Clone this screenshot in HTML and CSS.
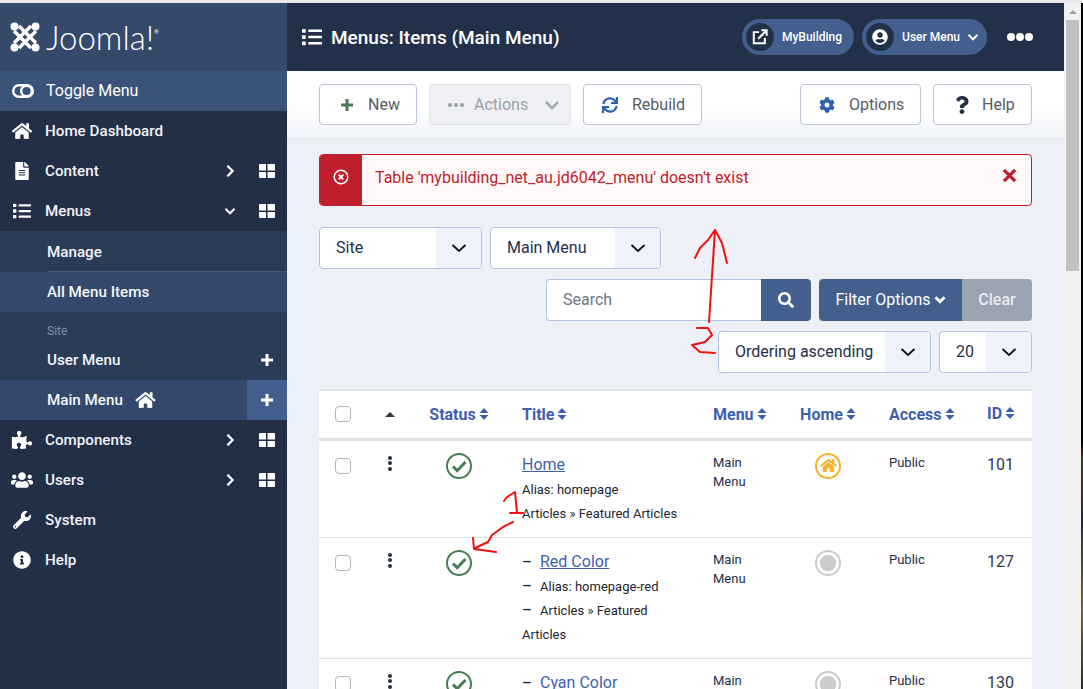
FILE: index.html
```html
<!DOCTYPE html>
<html lang="en">
<head>
<meta charset="utf-8">
<title>Menus: Items (Main Menu)</title>
<link rel="stylesheet" href="styles.css">
</head>
<body>
<svg class="sprite" xmlns="http://www.w3.org/2000/svg">
  <symbol id="i-list" viewBox="0 0 512 512"><path d="M80 368H16a16 16 0 0 0-16 16v64a16 16 0 0 0 16 16h64a16 16 0 0 0 16-16v-64a16 16 0 0 0-16-16zm0-320H16A16 16 0 0 0 0 64v64a16 16 0 0 0 16 16h64a16 16 0 0 0 16-16V64a16 16 0 0 0-16-16zm0 160H16a16 16 0 0 0-16 16v64a16 16 0 0 0 16 16h64a16 16 0 0 0 16-16v-64a16 16 0 0 0-16-16zm416 176H176a16 16 0 0 0-16 16v32a16 16 0 0 0 16 16h320a16 16 0 0 0 16-16v-32a16 16 0 0 0-16-16zm0-320H176a16 16 0 0 0-16 16v32a16 16 0 0 0 16 16h320a16 16 0 0 0 16-16V80a16 16 0 0 0-16-16zm0 160H176a16 16 0 0 0-16 16v32a16 16 0 0 0 16 16h320a16 16 0 0 0 16-16v-32a16 16 0 0 0-16-16z"/></symbol>
  <symbol id="i-home" viewBox="0 0 576 512"><path d="M280.37 148.26L96 300.11V464a16 16 0 0 0 16 16l112.06-.29a16 16 0 0 0 15.92-16V368a16 16 0 0 1 16-16h64a16 16 0 0 1 16 16v95.64a16 16 0 0 0 16 16.05L464 480a16 16 0 0 0 16-16V300L295.67 148.26a12.19 12.19 0 0 0-15.3 0zM571.6 251.47L488 182.56V44.05a12 12 0 0 0-12-12h-56a12 12 0 0 0-12 12v72.61L318.47 43a48 48 0 0 0-61 0L4.34 251.47a12 12 0 0 0-1.6 16.9l25.5 31A12 12 0 0 0 45.15 301l235.22-193.74a12.19 12.19 0 0 1 15.3 0L530.9 301a12 12 0 0 0 16.9-1.6l25.5-31a12 12 0 0 0-1.7-16.93z"/></symbol>
  <symbol id="i-file" viewBox="0 0 384 512"><path d="M224 136V0H24C10.7 0 0 10.7 0 24v464c0 13.3 10.7 24 24 24h336c13.3 0 24-10.7 24-24V160H248c-13.2 0-24-10.8-24-24zm64 236c0 6.6-5.4 12-12 12H108c-6.6 0-12-5.4-12-12v-8c0-6.6 5.4-12 12-12h168c6.6 0 12 5.4 12 12v8zm0-64c0 6.6-5.4 12-12 12H108c-6.6 0-12-5.4-12-12v-8c0-6.6 5.4-12 12-12h168c6.6 0 12 5.4 12 12v8zm0-72v8c0 6.6-5.4 12-12 12H108c-6.6 0-12-5.4-12-12v-8c0-6.6 5.4-12 12-12h168c6.6 0 12 5.4 12 12zm96-114.1v6.1H256V0h6.1c6.4 0 12.5 2.5 17 7l97.9 98c4.5 4.5 7 10.6 7 16.9z"/></symbol>
  <symbol id="i-puzzle" viewBox="0 0 576 512"><path d="M519.442 288.651c-41.519 0-59.5 31.593-82.058 31.593C377.409 320.244 432 144 432 144s-196.288 80-196.288-3.297c0-35.827 36.288-46.25 36.288-85.985C272 19.216 243.885 0 210.539 0c-34.654 0-66.366 18.891-66.366 56.346 0 41.364 31.711 59.277 31.711 81.75C175.885 207.719 0 166.758 0 166.758v333.237s178.635 41.047 178.635-28.662c0-22.473-40-40.107-40-81.471 0-37.456 29.25-56.346 63.577-56.346 33.673 0 61.788 19.216 61.788 54.717 0 39.735-36.288 50.158-36.288 85.985 0 60.803 129.675 25.73 181.23 25.73 0 0-34.725-120.101 25.827-120.101 35.962 0 46.423 36.152 86.308 36.152C556.712 416 576 387.99 576 354.443c0-34.199-18.962-65.792-56.558-65.792z"/></symbol>
  <symbol id="i-users" viewBox="0 0 640 512"><path d="M96 224c35.3 0 64-28.7 64-64s-28.7-64-64-64-64 28.7-64 64 28.7 64 64 64zm448 0c35.3 0 64-28.7 64-64s-28.7-64-64-64-64 28.7-64 64 28.7 64 64 64zm32 32h-64c-17.6 0-33.5 7.1-45.1 18.6 40.3 22.1 68.9 62 75.1 109.4h66c17.7 0 32-14.3 32-32v-32c0-35.3-28.7-64-64-64zm-256 0c61.9 0 112-50.1 112-112S381.9 32 320 32 208 82.1 208 144s50.1 112 112 112zm76.8 32h-8.3c-20.8 10-43.9 16-68.5 16s-47.6-6-68.5-16h-8.3C179.6 288 128 339.6 128 403.2V432c0 26.5 21.5 48 48 48h288c26.5 0 48-21.5 48-48v-28.8c0-63.6-51.6-115.2-115.2-115.2zm-223.7-13.4C161.5 263.1 145.6 256 128 256H64c-35.3 0-64 28.7-64 64v32c0 17.7 14.3 32 32 32h65.9c6.3-47.4 34.9-87.3 75.2-109.4z"/></symbol>
  <symbol id="i-wrench" viewBox="0 0 512 512"><path d="M507.73 109.1c-2.24-9.03-13.54-12.09-20.12-5.51l-74.36 74.36-67.88-11.31-11.31-67.88 74.36-74.36c6.62-6.62 3.43-17.9-5.66-20.16-47.38-11.74-99.55.91-136.58 37.93-39.64 39.64-50.55 97.1-34.05 147.2L18.74 402.76c-24.99 24.99-24.99 65.51 0 90.5 24.99 24.99 65.51 24.99 90.5 0l213.21-213.21c50.12 16.71 107.47 5.68 147.37-34.22 37.07-37.07 49.7-89.32 37.91-136.73zM64 472c-13.25 0-24-10.75-24-24 0-13.26 10.75-24 24-24s24 10.74 24 24c0 13.25-10.75 24-24 24z"/></symbol>
  <symbol id="i-info" viewBox="0 0 512 512"><path d="M256 8C119.043 8 8 119.083 8 256c0 136.997 111.043 248 248 248s248-111.003 248-248C504 119.083 392.957 8 256 8zm0 110c23.196 0 42 18.804 42 42s-18.804 42-42 42-42-18.804-42-42 18.804-42 42-42zm56 254c0 6.627-5.373 12-12 12h-88c-6.627 0-12-5.373-12-12v-24c0-6.627 5.373-12 12-12h12v-64h-12c-6.627 0-12-5.373-12-12v-24c0-6.627 5.373-12 12-12h64c6.627 0 12 5.373 12 12v100h12c6.627 0 12 5.373 12 12v24z"/></symbol>
  <symbol id="i-sync" viewBox="0 0 512 512"><path d="M440.65 12.57l4 82.77A247.16 247.16 0 0 0 255.83 8C134.73 8 33.91 94.92 12.29 209.82A12 12 0 0 0 24.09 224h49.05a12 12 0 0 0 11.67-9.26 175.91 175.91 0 0 1 317-56.94l-101.46-4.86a12 12 0 0 0-12.57 12v47.41a12 12 0 0 0 12 12H500a12 12 0 0 0 12-12V12a12 12 0 0 0-12-12h-47.37a12 12 0 0 0-11.98 12.57zM255.83 432a175.61 175.61 0 0 1-146-77.8l101.8 4.87a12 12 0 0 0 12.57-12v-47.4a12 12 0 0 0-12-12H12a12 12 0 0 0-12 12V500a12 12 0 0 0 12 12h47.35a12 12 0 0 0 12-12.6l-4.15-82.57A247.17 247.17 0 0 0 255.83 504c121.11 0 221.93-86.92 243.55-201.82a12 12 0 0 0-11.8-14.18h-49.05a12 12 0 0 0-11.67 9.26A175.86 175.86 0 0 1 255.83 432z"/></symbol>
  <symbol id="i-cog" viewBox="0 0 512 512"><path d="M487.4 315.7l-42.6-24.6c4.3-23.2 4.3-47 0-70.2l42.6-24.6c4.9-2.8 7.1-8.6 5.5-14-11.1-35.6-30-67.8-54.7-94.6-3.8-4.1-10-5.1-14.8-2.3L380.8 110c-17.9-15.4-38.5-27.3-60.8-35.1V25.8c0-5.6-3.9-10.5-9.4-11.7-36.7-8.2-74.3-7.8-109.2 0-5.5 1.2-9.4 6.1-9.4 11.7V75c-22.2 7.9-42.8 19.8-60.8 35.1L88.7 85.5c-4.9-2.8-11-1.9-14.8 2.3-24.7 26.7-43.6 58.9-54.7 94.6-1.7 5.4.6 11.2 5.5 14L67.3 221c-4.3 23.2-4.3 47 0 70.2l-42.6 24.6c-4.9 2.8-7.1 8.6-5.5 14 11.1 35.6 30 67.8 54.7 94.6 3.8 4.1 10 5.1 14.8 2.3l42.6-24.6c17.9 15.4 38.5 27.3 60.8 35.1v49.2c0 5.6 3.9 10.5 9.4 11.7 36.7 8.2 74.3 7.8 109.2 0 5.5-1.2 9.4-6.1 9.4-11.7v-49.2c22.2-7.9 42.8-19.8 60.8-35.1l42.6 24.6c4.9 2.8 11 1.9 14.8-2.3 24.7-26.7 43.6-58.9 54.7-94.6 1.5-5.5-.7-11.3-5.6-14.1zM256 336c-44.1 0-80-35.9-80-80s35.9-80 80-80 80 35.9 80 80-35.9 80-80 80z"/></symbol>
  <symbol id="i-question" viewBox="0 0 384 512"><path d="M202.021 0C122.202 0 70.503 32.703 29.914 91.026c-7.363 10.58-5.093 25.086 5.178 32.874l43.138 32.709c10.373 7.865 25.132 6.026 33.253-4.148 25.049-31.381 43.63-49.449 82.757-49.449 30.764 0 68.816 19.799 68.816 49.631 0 22.552-18.617 34.134-48.993 51.164-35.423 19.86-82.299 44.576-82.299 106.405V320c0 13.255 10.745 24 24 24h72.471c13.255 0 24-10.745 24-24v-5.773c0-42.86 125.268-44.645 125.268-160.627C377.504 66.256 286.902 0 202.021 0zM192 373.459c-38.196 0-69.271 31.075-69.271 69.271 0 38.195 31.075 69.27 69.271 69.27s69.271-31.075 69.271-69.271-31.075-69.27-69.271-69.27z"/></symbol>
  <symbol id="i-search" viewBox="0 0 512 512"><path d="M505 442.7L405.3 343c-4.5-4.5-10.6-7-17-7H372c27.6-35.3 44-79.7 44-128C416 93.1 322.9 0 208 0S0 93.1 0 208s93.1 208 208 208c48.3 0 92.7-16.4 128-44v16.3c0 6.4 2.5 12.5 7 17l99.7 99.7c9.4 9.4 24.6 9.4 33.9 0l28.3-28.3c9.4-9.4 9.4-24.6.1-34zM208 336c-70.7 0-128-57.2-128-128 0-70.7 57.2-128 128-128 70.7 0 128 57.2 128 128 0 70.7-57.2 128-128 128z"/></symbol>
  <symbol id="i-user" viewBox="0 0 496 512"><path d="M248 8C111 8 0 119 0 256s111 248 248 248 248-111 248-248S385 8 248 8zm0 96c48.6 0 88 39.4 88 88s-39.4 88-88 88-88-39.4-88-88 39.4-88 88-88zm0 344c-58.7 0-111.3-26.6-146.5-68.2 18.8-35.4 55.6-59.8 98.5-59.8 2.4 0 4.8.4 7.1 1.1 13 4.2 26.6 6.9 40.9 6.9 14.3 0 28-2.7 40.9-6.9 2.3-.7 4.7-1.1 7.1-1.1 42.9 0 79.7 24.4 98.5 59.8C359.3 421.4 306.7 448 248 448z"/></symbol>
  <symbol id="i-right" viewBox="0 0 12 16"><path d="M3 2l6 6-6 6" fill="none" stroke="currentColor" stroke-width="2.600"/></symbol>
  <symbol id="i-down" viewBox="0 0 16 12"><path d="M2 3l6 6 6-6" fill="none" stroke="currentColor" stroke-width="2.600"/></symbol>
  <symbol id="i-bold" viewBox="0 0 16 12"><path d="M2 3l6 6 6-6" fill="none" stroke="currentColor" stroke-width="3.800"/></symbol>
  <symbol id="i-thin" viewBox="0 0 16 10"><path d="M1.500 2L8 8l6.500-6" fill="none" stroke="currentColor" stroke-width="1.800"/></symbol>
  <symbol id="i-plus" viewBox="0 0 14 14"><path d="M7 1v12M1 7h12" fill="none" stroke="currentColor" stroke-width="3"/></symbol>
  <symbol id="i-grid" viewBox="0 0 16 14"><path d="M0 1a1 1 0 0 1 1-1h6v6.500H0zM8.500 0H15a1 1 0 0 1 1 1v5.500H8.500zM0 8h7v6H1a1 1 0 0 1-1-1zM8.500 8H16v5a1 1 0 0 1-1 1H8.500z"/></symbol>
  <symbol id="i-sort" viewBox="0 0 10 12"><path d="M5 0l4.500 5H.5zM5 12L.5 7h9z"/></symbol>
  <symbol id="i-check" viewBox="0 0 26 26"><circle cx="13" cy="13" r="12" fill="none" stroke="#457d54" stroke-width="2"/><path d="M7 13.500l4.200 4.200L19.500 9" fill="none" stroke="#457d54" stroke-width="3"/></symbol>
</svg>

<div class="topline"></div>
<div class="page">
  <aside class="sidebar">
    <div class="brand">
      <svg class="brand-mark" viewBox="0 0 30 30" fill="none" stroke="#fff" stroke-width="3.400">
        <path d="M4 9L21 26M9 4L26 21M26 9L9 26M21 4L4 21"/>
        <circle cx="4.500" cy="4.500" r="4" fill="#fff" stroke="none"/><circle cx="25.500" cy="4.500" r="4" fill="#fff" stroke="none"/>
        <circle cx="4.500" cy="25.500" r="4" fill="#fff" stroke="none"/><circle cx="25.500" cy="25.500" r="4" fill="#fff" stroke="none"/>
      </svg>
      <span class="brand-name">Joomla!</span><sup class="brand-reg">®</sup>
    </div>
    <nav class="nav">
      <div class="nav-item nav-toggle"><svg class="toggle-icon" viewBox="0 0 22 14" fill="none" stroke="#fff" stroke-width="2.400"><rect x="1.200" y="1.200" width="19.600" height="11.600" rx="5.800"/><circle cx="14.500" cy="7" r="5.300"/></svg><span class="nav-label">Toggle Menu</span></div>
      <div class="nav-item"><svg class="nav-icon"><use href="#i-home"/></svg><span class="nav-label">Home Dashboard</span></div>
      <div class="nav-item"><svg class="nav-icon"><use href="#i-file"/></svg><span class="nav-label">Content</span><svg class="nav-arrow"><use href="#i-right"/></svg><svg class="nav-grid"><use href="#i-grid"/></svg></div>
      <div class="nav-item"><svg class="nav-icon"><use href="#i-list"/></svg><span class="nav-label">Menus</span><svg class="nav-arrow"><use href="#i-down"/></svg><svg class="nav-grid"><use href="#i-grid"/></svg></div>
      <div class="sub">
        <div class="sub-item sub-rule">Manage</div>
        <div class="sub-item sub-active">All Menu Items</div>
        <div class="sub-heading">Site</div>
        <div class="sub-item sub-user">User Menu<svg class="sub-plus"><use href="#i-plus"/></svg></div>
        <div class="sub-item sub-active sub-main">Main Menu<svg class="sub-home"><use href="#i-home"/></svg><span class="sub-add"><svg class="sub-plus"><use href="#i-plus"/></svg></span></div>
      </div>
      <div class="nav-item"><svg class="nav-icon"><use href="#i-puzzle"/></svg><span class="nav-label">Components</span><svg class="nav-arrow"><use href="#i-right"/></svg><svg class="nav-grid"><use href="#i-grid"/></svg></div>
      <div class="nav-item"><svg class="nav-icon"><use href="#i-users"/></svg><span class="nav-label">Users</span><svg class="nav-arrow"><use href="#i-right"/></svg><svg class="nav-grid"><use href="#i-grid"/></svg></div>
      <div class="nav-item"><svg class="nav-icon"><use href="#i-wrench"/></svg><span class="nav-label">System</span></div>
      <div class="nav-item"><svg class="nav-icon"><use href="#i-info"/></svg><span class="nav-label">Help</span></div>
    </nav>
  </aside>

  <main class="main">
    <header class="header">
      <svg class="header-icon"><use href="#i-list"/></svg>
      <h1 class="header-title">Menus: Items (Main Menu)</h1>
      <div class="pill"><span class="pill-icon"><svg class="pill-link" viewBox="0 0 18 18"><path d="M8 3.500H2v12.500h12.500v-6M7 11L16 2M10.500 1.500H16.500V7.500"/></svg></span><span class="pill-text">MyBuilding</span></div>
      <div class="pill pill-user"><span class="pill-icon"><svg class="pill-svg"><use href="#i-user"/></svg></span><span class="pill-text">User Menu</span><svg class="pill-caret"><use href="#i-down"/></svg></div>
      <div class="dots"><span class="dot"></span><span class="dot"></span><span class="dot"></span></div>
    </header>

    <div class="toolbar">
      <div class="btn btn-new"><svg class="btn-icon icon-green"><use href="#i-plus"/></svg>New</div>
      <div class="btn btn-actions"><span class="mini-dots"><span class="mini-dot"></span><span class="mini-dot"></span><span class="mini-dot"></span></span>Actions<svg class="actions-caret"><use href="#i-down"/></svg></div>
      <div class="btn btn-rebuild"><svg class="btn-icon icon-blue"><use href="#i-sync"/></svg>Rebuild</div>
      <div class="btn btn-options"><svg class="btn-icon icon-blue"><use href="#i-cog"/></svg>Options</div>
      <div class="btn btn-help"><svg class="btn-icon icon-navy"><use href="#i-question"/></svg>Help</div>
    </div>

    <div class="content">
      <div class="alert">
        <div class="alert-side"><svg class="alert-icon" viewBox="0 0 16 16" fill="none" stroke="#fff"><circle cx="8" cy="8" r="6.800" stroke-width="1.500"/><path d="M5.700 5.700l4.600 4.600M10.300 5.700l-4.600 4.600" stroke-width="1.800"/></svg></div>
        <div class="alert-text">Table 'mybuilding_net_au.jd6042_menu' doesn't exist</div>
        <svg class="alert-close" viewBox="0 0 16 16" fill="none" stroke="#bf1e2c" stroke-width="3.500"><path d="M2 2l12 12M14 2L2 14"/></svg>
      </div>

      <div class="row-selects">
        <div class="select select-site"><span class="select-value">Site</span><span class="select-arrow"><svg class="select-chevron"><use href="#i-thin"/></svg></span></div>
        <div class="select select-menu"><span class="select-value">Main Menu</span><span class="select-arrow"><svg class="select-chevron"><use href="#i-thin"/></svg></span></div>
      </div>

      <div class="row-search">
        <div class="search-input">Search</div>
        <div class="search-btn"><svg class="search-icon"><use href="#i-search"/></svg></div>
        <div class="filter-btn">Filter Options<svg class="filter-caret"><use href="#i-bold"/></svg></div>
        <div class="clear-btn">Clear</div>
      </div>

      <div class="row-order">
        <div class="select select-order"><span class="select-value">Ordering ascending</span><span class="select-arrow"><svg class="select-chevron"><use href="#i-thin"/></svg></span></div>
        <div class="select select-limit"><span class="select-value">20</span><span class="select-arrow"><svg class="select-chevron"><use href="#i-thin"/></svg></span></div>
      </div>

      <table class="table">
        <colgroup>
          <col class="c1"><col class="c2"><col class="c3"><col class="c4"><col class="c5"><col class="c6"><col class="c7"><col class="c8">
        </colgroup>
        <thead>
          <tr>
            <th class="cell-check"><span class="checkbox"></span></th>
            <th class="cell-center"><span class="caret-up"></span></th>
            <th class="cell-center">Status<svg class="sort"><use href="#i-sort"/></svg></th>
            <th class="cell-title">Title<svg class="sort"><use href="#i-sort"/></svg></th>
            <th class="cell-menu">Menu<svg class="sort"><use href="#i-sort"/></svg></th>
            <th class="cell-center">Home<svg class="sort"><use href="#i-sort"/></svg></th>
            <th class="cell-access">Access<svg class="sort"><use href="#i-sort"/></svg></th>
            <th class="cell-id">ID<svg class="sort"><use href="#i-sort"/></svg></th>
          </tr>
        </thead>
        <tbody>
          <tr>
            <td class="cell-check"><span class="checkbox"></span></td>
            <td class="cell-center"><span class="kebab"><span class="kdot"></span><span class="kdot"></span><span class="kdot"></span></span></td>
            <td class="cell-center"><svg class="state"><use href="#i-check"/></svg></td>
            <td class="cell-title">
              <a class="item-link" href="#">Home</a>
              <div class="item-meta">Alias: homepage</div>
              <div class="item-meta">Articles » Featured Articles</div>
            </td>
            <td class="cell-menu"><div class="small">Main Menu</div></td>
            <td class="cell-center"><span class="home-badge"><svg class="home-badge-icon"><use href="#i-home"/></svg></span></td>
            <td class="cell-access"><div class="small">Public</div></td>
            <td class="cell-id">101</td>
          </tr>
          <tr>
            <td class="cell-check"><span class="checkbox"></span></td>
            <td class="cell-center"><span class="kebab"><span class="kdot"></span><span class="kdot"></span><span class="kdot"></span></span></td>
            <td class="cell-center"><svg class="state"><use href="#i-check"/></svg></td>
            <td class="cell-title">
              <span class="dash">–</span><a class="item-link" href="#">Red Color</a>
              <div class="item-meta"><span class="dash">–</span>Alias: homepage-red</div>
              <div class="item-meta"><span class="dash">–</span>Articles » Featured Articles</div>
            </td>
            <td class="cell-menu"><div class="small">Main Menu</div></td>
            <td class="cell-center"><span class="home-off"></span></td>
            <td class="cell-access"><div class="small">Public</div></td>
            <td class="cell-id">127</td>
          </tr>
          <tr>
            <td class="cell-check"><span class="checkbox"></span></td>
            <td class="cell-center"><span class="kebab"><span class="kdot"></span><span class="kdot"></span><span class="kdot"></span></span></td>
            <td class="cell-center"><svg class="state"><use href="#i-check"/></svg></td>
            <td class="cell-title">
              <span class="dash">–</span><a class="item-link" href="#">Cyan Color</a>
            </td>
            <td class="cell-menu"><div class="small">Main Menu</div></td>
            <td class="cell-center"><span class="home-off"></span></td>
            <td class="cell-access"><div class="small">Public</div></td>
            <td class="cell-id">130</td>
          </tr>
        </tbody>
      </table>
    </div>
  </main>

  <div class="scrollbar"><span class="scroll-up"></span><span class="scroll-thumb"></span></div>
  <div class="edge"></div>
</div>

<svg class="marks" viewBox="0 0 1083 689" fill="none" stroke="#f01010" stroke-width="2" stroke-linecap="round" stroke-linejoin="round">
  <path d="M715 230C713 260 711 290 709 322M695 258L700 248L708 240L715 230L722 243L727 263"/>
  <path d="M697 328H708L712 335L705 342L692 345L700 352L715 353"/>
  <path d="M504 501L507 497L515 492L517 513M510 513H523"/>
  <path d="M513 522L503 527L492 535L488 542L475 548M473 538L474 549L496 552"/>
</svg>
</body>
</html>
```
FILE: styles.css
```css
* { box-sizing: border-box; }
html, body { margin: 0; height: 100%; }
body { width: 1083px; height: 689px; overflow: hidden; position: relative; background: #edf0f6; font-family: Roboto, "Liberation Sans", sans-serif; color: #22304a; }
.sprite { display: none; }
.topline { height: 3px; background: #e9e9e9; }
.page { display: flex; height: 686px; }

.sidebar { width: 287px; flex: none; background: #232e47; color: #fff; }
.brand { height: 68px; background: #35496a; display: flex; align-items: center; padding-left: 10px; }
.brand-mark { width: 30px; height: 30px; margin-right: 6px; }
.brand-name { font-family: Lato, sans-serif; font-weight: 300; font-size: 33px; line-height: 1; }
.brand-reg { font-size: 6px; align-self: flex-start; margin-top: 25px; }
.nav-item { height: 40px; display: flex; align-items: center; position: relative; }
.nav-toggle { background: #3c5379; }
.nav-icon { width: 22px; height: 18px; margin-left: 11px; fill: #fff; flex: none; }
.toggle-icon { width: 22px; height: 14px; margin-left: 12px; flex: none; }
.nav-label { margin-left: 12px; font-size: 15.200px; font-weight: 500; flex: 1; color: #f1f3f7; }
.nav-toggle .nav-label { margin-left: 12px; font-size: 16px; font-weight: 400; color: #fff; padding-bottom: 2px; }
.nav-arrow { width: 12px; height: 14px; color: #fff; margin-right: 23px; }
.nav-grid { width: 16px; height: 14px; fill: #fff; margin-right: 12px; }
.sub { background: #2a3c58; }
.sub-item { height: 40px; display: flex; align-items: center; padding-left: 47px; font-size: 15.200px; font-weight: 500; position: relative; color: #f4f6f9; }
.sub-rule { height: 41px; }
.sub-rule::after { content: ""; position: absolute; left: 47px; right: 0; bottom: 0; height: 1px; background: #415a84; }
.sub-active { background: #33486a; }
.sub-heading { height: 28px; padding: 12px 0 0 47px; font-size: 12px; line-height: 14px; color: #8190ab; }
.sub-user { justify-content: space-between; padding-right: 13px; }
.sub-plus { width: 14px; height: 14px; color: #fff; display: block; }
.sub-main { padding-right: 0; }
.sub-home { width: 21px; height: 18px; fill: #fff; margin-left: 12px; }
.sub-add { margin-left: auto; width: 40px; height: 40px; background: #425f8d; display: flex; align-items: center; justify-content: center; }

.main { width: 777px; flex: none; display: flex; flex-direction: column; overflow: hidden; }
.header { height: 68px; flex: none; background: #22304a; display: flex; align-items: center; padding-left: 15px; color: #fff; }
.header-icon { width: 20px; height: 20px; fill: #fff; flex: none; }
.header-title { margin: 0 auto 0 9px; font-size: 19px; font-weight: 500; color: #fff; }
.pill { height: 36px; border-radius: 18px; background: #425f8d; display: flex; align-items: center; padding: 0 12px 0 4px; margin-right: 8px; }
.pill-icon { width: 28px; height: 28px; border-radius: 50%; background: #22304a; display: flex; align-items: center; justify-content: center; margin-right: 8px; }
.pill-svg { width: 16px; height: 16px; fill: #fff; }
.pill-link { width: 16px; height: 16px; fill: none; stroke: #fff; stroke-width: 2.200; }
.pill-text { font-size: 12px; font-weight: 500; color: #fff; }
.pill-user { padding-right: 8px; margin-right: 20px; }
.pill-caret { width: 12px; height: 10px; color: #fff; margin-left: 7px; }
.dots { display: flex; gap: 1px; margin-right: 31px; }
.dot { width: 8px; height: 8px; border-radius: 50%; background: #fff; }

.toolbar { height: 67px; flex: none; display: flex; align-items: center; padding: 0 32px; gap: 12px; background: linear-gradient(#fff 50%, #f1f4f9); box-shadow: 0 2px 6px rgba(60,80,120,.06); }
.btn { height: 41px; border: 1px solid #bcc6d8; border-radius: 4px; background: #fff; display: flex; align-items: center; font-size: 16px; color: #555c68; }
.btn-icon { width: 16px; height: 16px; flex: none; }
.icon-green { color: #457d54; width: 14px; height: 14px; margin-right: 14px; }
.icon-blue { fill: #2f5fae; margin-right: 14px; }
.icon-navy { fill: #22304a; margin-right: 13px; width: 14px; height: 18px; }
.btn-new { width: 98px; padding-left: 20px; }
.btn-actions { width: 142px; padding-left: 18px; background: #eef0f4; border-color: #dde1e8; color: #9aa0aa; }
.mini-dots { display: flex; gap: 2px; margin-right: 10px; }
.mini-dot { width: 4px; height: 4px; border-radius: 50%; background: #9aa0aa; }
.actions-caret { width: 16px; height: 12px; color: #a5abb5; margin-left: 16px; }
.btn-rebuild { width: 119px; padding-left: 18px; }
.btn-options { width: 121px; padding-left: 18px; margin-left: auto; }
.btn-help { width: 99px; padding-left: 21px; }

.content { padding: 16px 32px 0; flex: 1; position: relative; }
.alert { height: 52px; border: 1px solid #bf1e2c; border-radius: 4px; background: #fef8f8; display: flex; align-items: center; overflow: hidden; }
.alert-side { width: 42px; height: 100%; background: #bf1e2c; display: flex; align-items: center; justify-content: center; flex: none; padding-bottom: 6px; }
.alert-icon { width: 16px; height: 16px; }
.alert-text { margin-left: 13px; flex: 1; font-size: 16px; color: #bf1e2c; padding-bottom: 6px; }
.alert-close { width: 15px; height: 15px; margin-right: 14px; margin-bottom: 9px; }

.row-selects { display: flex; gap: 8px; margin-top: 21px; }
.select { height: 42px; border: 1px solid #b2c3e0; border-radius: 4px; background: #fff; display: flex; align-items: stretch; overflow: hidden; font-size: 16px; color: #22304a; }
.select-value { flex: 1; padding-left: 16px; line-height: 40px; white-space: nowrap; }
.select-arrow { background: #eef2fa; width: 45px; display: flex; align-items: center; justify-content: center; flex: none; }
.select-chevron { width: 16px; height: 10px; color: #111; }
.select-site { width: 163px; }
.select-menu { width: 171px; }
.row-search { display: flex; justify-content: flex-end; margin-top: 10px; height: 42px; }
.search-input { width: 215px; border: 1px solid #b2c3e0; border-right: 0; border-radius: 4px 0 0 4px; background: #fff; padding-left: 16px; line-height: 40px; font-size: 16px; color: #6c7686; }
.search-btn { width: 50px; background: #425f8d; border-radius: 0 4px 4px 0; display: flex; align-items: center; justify-content: center; margin-right: 8px; }
.search-icon { width: 16px; height: 16px; fill: #fff; }
.filter-btn { width: 143px; background: #425f8d; color: #fff; border-radius: 4px 0 0 4px; display: flex; align-items: center; justify-content: center; font-size: 16px; padding-bottom: 2px; }
.filter-caret { width: 12px; height: 9px; color: #fff; margin-left: 3px; }
.clear-btn { width: 70px; background: #9aa3b2; color: #e9ecf1; border-radius: 0 4px 4px 0; display: flex; align-items: center; justify-content: center; font-size: 16px; font-weight: 500; padding-bottom: 2px; }
.row-order { display: flex; justify-content: flex-end; gap: 8px; margin-top: 10px; }
.select-order { width: 213px; }
.select-limit { width: 93px; }

.table { width: 713px; margin-top: 16px; border-collapse: collapse; table-layout: fixed; background: #fff; }
.c1 { width: 56px; } .c2 { width: 30px; } .c3 { width: 108px; } .c4 { width: 192px; } .c5 { width: 87px; } .c6 { width: 72px; } .c7 { width: 115px; } .c8 { width: 53px; }
thead tr { height: 49px; border-top: 2px solid #dfe3e8; border-bottom: 3px solid #dfe3e8; }
th { text-align: left; font-size: 16px; font-weight: 700; color: #3e5fae; white-space: nowrap; padding: 0; }
td { vertical-align: top; padding: 0; }
tbody tr { border-bottom: 1px solid #dfe3e8; }
.sort { width: 10px; height: 12px; fill: #3e5fae; margin-left: 3px; }
.cell-check { padding-left: 16px; }
.cell-center { text-align: center; }
.cell-title { padding: 9px 16px 11px 9px; }
th.cell-title { padding: 0 0 0 9px; }
.cell-menu { padding: 12px 30px 0 8px; }
th.cell-menu { padding: 0 0 0 8px; }
.cell-access { padding: 12px 0 0 25px; }
th.cell-access { padding: 0 0 0 25px; }
.cell-id { padding: 12px 0 0 8px; font-size: 16px; line-height: 24px; color: #30394b; }
th.cell-id { padding: 0 0 0 8px; color: #3e5fae; }
.checkbox { display: block; width: 16px; height: 16px; border: 1px solid #b5b5b5; border-radius: 4px; background: #fff; }
td .checkbox { margin-top: 17px; }
.caret-up { display: block; margin: 0 auto; width: 0; height: 0; border-left: 5px solid transparent; border-right: 5px solid transparent; border-bottom: 5px solid #333; }
.kebab { display: inline-flex; flex-direction: column; gap: 1.500px; margin-top: 15px; }
.kdot { width: 4px; height: 4px; border-radius: 50%; background: #22304a; }
.state { width: 26px; height: 26px; margin-top: 12px; display: inline-block; }
.item-link { font-size: 16px; line-height: 27px; color: #3e5fae; text-decoration: underline; display: inline-block; padding-top: 1px; }
.item-meta { font-size: 13px; line-height: 24px; color: #22262e; }
.dash { display: inline-block; width: 18px; font-size: 15px; line-height: 1; color: #22262e; font-weight: 500; }
.small { font-size: 13px; line-height: 19px; color: #22304a; }
.home-badge, .home-off { display: inline-flex; align-items: center; justify-content: center; width: 26px; height: 26px; border-radius: 50%; margin-top: 12px; }
.home-badge { border: 2px solid #f9b22c; }
.home-badge-icon { width: 17px; height: 15px; fill: #f9b22c; }
.home-off { border: 2px solid #ccc; background: radial-gradient(circle, #ccc 8px, #fff 8.500px); }

.scrollbar { width: 17px; flex: none; background: #f1f1f1; display: flex; flex-direction: column; align-items: center; }
.scroll-up { width: 0; height: 0; border-left: 4px solid transparent; border-right: 4px solid transparent; border-bottom: 4px solid #a3a3a3; margin: 7px 0 6px; }
.scroll-thumb { width: 13px; height: 251px; background: #c1c1c1; }
.edge { width: 2px; flex: none; background: linear-gradient(#000 64%, #4a3020 66%, #2a2a3a 76%, #6a6a20 88%, #2a2a30 100%); }
.marks { position: absolute; left: 0; top: 0; width: 1083px; height: 689px; pointer-events: none; }
```
